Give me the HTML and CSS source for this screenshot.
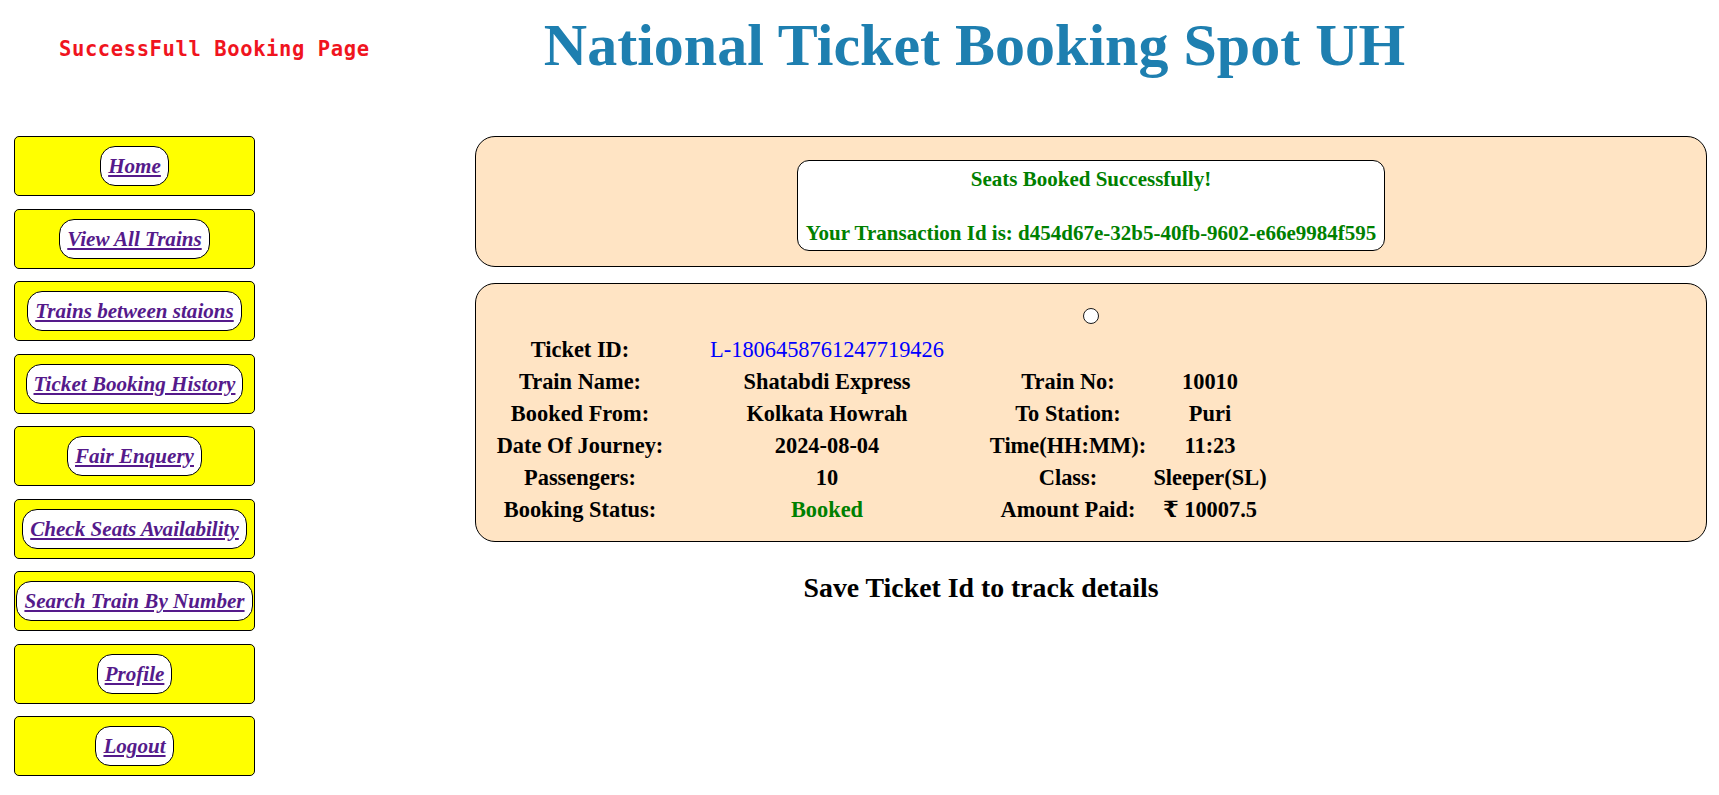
FILE: index.html
```html
<!DOCTYPE html>
<html lang="en">
<head>
<meta charset="utf-8">
<title>SuccessFull Booking Page</title>
<link rel="stylesheet" href="styles.css">
</head>
<body>
<header class="header">
  <h3 class="page-label">SuccessFull Booking Page</h3>
  <h1 class="site-title">National Ticket Booking Spot UH</h1>
</header>
<div class="layout">
  <nav class="sidebar">
    <div class="nav-box"><a class="nav-link" href="#">Home</a></div>
    <div class="nav-box"><a class="nav-link" href="#">View All Trains</a></div>
    <div class="nav-box"><a class="nav-link" href="#">Trains between staions</a></div>
    <div class="nav-box"><a class="nav-link" href="#">Ticket Booking History</a></div>
    <div class="nav-box"><a class="nav-link" href="#">Fair Enquery</a></div>
    <div class="nav-box"><a class="nav-link" href="#">Check Seats Availability</a></div>
    <div class="nav-box"><a class="nav-link" href="#">Search Train By Number</a></div>
    <div class="nav-box"><a class="nav-link" href="#">Profile</a></div>
    <div class="nav-box"><a class="nav-link" href="#">Logout</a></div>
  </nav>
  <main class="main">
    <section class="card card-status">
      <div class="status-box">Seats Booked Successfully!<br><br>Your Transaction Id is: d454d67e-32b5-40fb-9602-e66e9984f595</div>
    </section>
    <section class="card card-ticket">
      <span class="dot"></span>
      <div class="ticket-grid">
        <div class="cell">Ticket ID:</div>
        <div class="cell ticket-id">L-1806458761247719426</div>
        <div class="cell"></div>
        <div class="cell"></div>

        <div class="cell">Train Name:</div>
        <div class="cell">Shatabdi Express</div>
        <div class="cell">Train No:</div>
        <div class="cell">10010</div>

        <div class="cell">Booked From:</div>
        <div class="cell">Kolkata Howrah</div>
        <div class="cell">To Station:</div>
        <div class="cell">Puri</div>

        <div class="cell">Date Of Journey:</div>
        <div class="cell">2024-08-04</div>
        <div class="cell">Time(HH:MM):</div>
        <div class="cell">11:23</div>

        <div class="cell">Passengers:</div>
        <div class="cell">10</div>
        <div class="cell">Class:</div>
        <div class="cell">Sleeper(SL)</div>

        <div class="cell">Booking Status:</div>
        <div class="cell booked">Booked</div>
        <div class="cell">Amount Paid:</div>
        <div class="cell">&#8377; 10007.5</div>
      </div>
    </section>
    <p class="note">Save Ticket Id to track details</p>
  </main>
</div>
</body>
</html>
```

FILE: styles.css
```css
html, body {
  margin: 0;
  padding: 0;
  background: #ffffff;
}

body {
  font-family: "Liberation Serif", "Times New Roman", "DejaVu Serif", serif;
  color: #000000;
}

.header {
  display: grid;
  grid-template-columns: 230px 1fr;
  align-items: start;
  height: 136px;
}

.page-label {
  margin: 37px 0 0 59px;
  font-family: "DejaVu Sans Mono", "Liberation Mono", monospace;
  font-size: 20.5px;
  letter-spacing: 0.6px;
  line-height: 24px;
  font-weight: bold;
  color: #f0141e;
  white-space: nowrap;
}

.site-title {
  margin: 10px 0 0 0;
  font-size: 60px;
  line-height: 70px;
  font-weight: bold;
  color: #1e7fb0;
  text-align: center;
  white-space: nowrap;
}

.layout {
  display: flex;
  align-items: flex-start;
  padding-left: 14px;
}

.sidebar {
  width: 241px;
  flex: none;
  display: flex;
  flex-direction: column;
  gap: 12.5px;
}

.nav-box {
  box-sizing: border-box;
  height: 60px;
  padding: 9px 0;
  background: #ffff00;
  border: 1px solid #000000;
  border-radius: 5px;
  display: flex;
  justify-content: center;
}

.nav-link {
  box-sizing: border-box;
  height: 40px;
  padding: 7px 7px;
  background: #ffffff;
  border: 1px solid #000000;
  border-radius: 15px;
  font-size: 21.1px;
  line-height: 24px;
  font-weight: bold;
  font-style: italic;
  color: #551a8b;
  text-decoration: underline;
  white-space: nowrap;
}

.main {
  flex: 1;
  min-width: 0;
  padding-right: 12px;
}

.card {
  margin-left: 220px;
  background: #ffe4c4;
  border: 1px solid #000000;
  border-radius: 20px;
}

.card-status {
  padding: 23px 0 15px;
}

.status-box {
  width: fit-content;
  margin: 0 auto;
  padding: 5px 8px 3px;
  background: #ffffff;
  border: 1px solid #000000;
  border-radius: 12px;
  font-size: 21px;
  line-height: 27px;
  font-weight: bold;
  color: #008000;
  text-align: center;
  white-space: nowrap;
}

.card-ticket {
  margin-top: 16px;
  padding: 24px 0 15px 4px;
}

.dot {
  display: block;
  box-sizing: border-box;
  width: 16px;
  height: 16px;
  margin: 0 auto;
  position: relative;
  left: -2px;
  background: #ffffff;
  border: 1.5px solid #1a1a1a;
  border-radius: 50%;
}

.ticket-grid {
  margin-top: 10px;
  display: grid;
  grid-template-columns: 200px 294px 188px 96px;
  grid-auto-rows: 32px;
}

.cell {
  display: flex;
  justify-content: center;
  white-space: nowrap;
  font-size: 22.4px;
  line-height: 32px;
  font-weight: bold;
}

.ticket-id {
  font-weight: normal;
  color: #0000ff;
}

.booked {
  color: #008000;
}

.note {
  margin: 30px 0 0 0;
  font-size: 27.8px;
  line-height: 32px;
  font-weight: bold;
  text-align: center;
}
```
